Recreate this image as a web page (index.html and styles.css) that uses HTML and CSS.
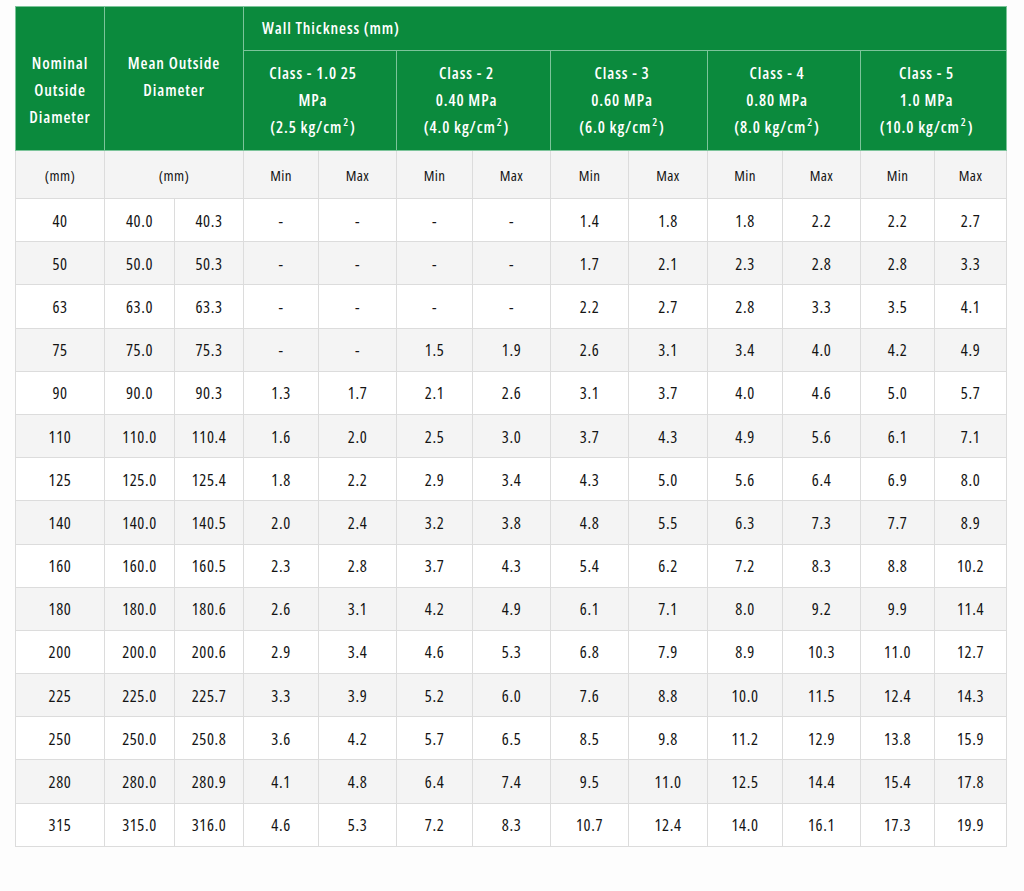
FILE: index.html
```html
<!DOCTYPE html>
<html>
<head>
<meta charset="utf-8">
<link rel="stylesheet" href="styles.css">
</head>
<body>
<table class="spec">
<colgroup>
<col style="width:89px"><col style="width:70px"><col style="width:69px">
<col style="width:75px"><col style="width:78px"><col style="width:76px"><col style="width:78px">
<col style="width:78px"><col style="width:79px"><col style="width:75px"><col style="width:78px">
<col style="width:74px"><col style="width:72px">
</colgroup>
<thead>
<tr class="h1">
<th rowspan="2" class="top">Nominal<br>Outside<br>Diameter</th>
<th rowspan="2" colspan="2" class="top">Mean Outside<br>Diameter</th>
<th colspan="10" class="wall">Wall Thickness (mm)</th>
</tr>
<tr class="h2">
<th colspan="2" class="cls">Class - 1.0 25<br>MPa<br>(2.5 kg/cm<sup>2</sup>)</th>
<th colspan="2" class="cls">Class - 2<br>0.40 MPa<br>(4.0 kg/cm<sup>2</sup>)</th>
<th colspan="2" class="cls">Class - 3<br>0.60 MPa<br>(6.0 kg/cm<sup>2</sup>)</th>
<th colspan="2" class="cls">Class - 4<br>0.80 MPa<br>(8.0 kg/cm<sup>2</sup>)</th>
<th colspan="2" class="cls">Class - 5<br>1.0 MPa<br>(10.0 kg/cm<sup>2</sup>)</th>
</tr>
</thead>
<tbody>
<tr class="units"><td>(mm)</td><td colspan="2">(mm)</td><td>Min</td><td>Max</td><td>Min</td><td>Max</td><td>Min</td><td>Max</td><td>Min</td><td>Max</td><td>Min</td><td>Max</td></tr>
<tr><td>40</td><td>40.0</td><td>40.3</td><td>-</td><td>-</td><td>-</td><td>-</td><td>1.4</td><td>1.8</td><td>1.8</td><td>2.2</td><td>2.2</td><td>2.7</td></tr>
<tr><td>50</td><td>50.0</td><td>50.3</td><td>-</td><td>-</td><td>-</td><td>-</td><td>1.7</td><td>2.1</td><td>2.3</td><td>2.8</td><td>2.8</td><td>3.3</td></tr>
<tr><td>63</td><td>63.0</td><td>63.3</td><td>-</td><td>-</td><td>-</td><td>-</td><td>2.2</td><td>2.7</td><td>2.8</td><td>3.3</td><td>3.5</td><td>4.1</td></tr>
<tr><td>75</td><td>75.0</td><td>75.3</td><td>-</td><td>-</td><td>1.5</td><td>1.9</td><td>2.6</td><td>3.1</td><td>3.4</td><td>4.0</td><td>4.2</td><td>4.9</td></tr>
<tr><td>90</td><td>90.0</td><td>90.3</td><td>1.3</td><td>1.7</td><td>2.1</td><td>2.6</td><td>3.1</td><td>3.7</td><td>4.0</td><td>4.6</td><td>5.0</td><td>5.7</td></tr>
<tr><td>110</td><td>110.0</td><td>110.4</td><td>1.6</td><td>2.0</td><td>2.5</td><td>3.0</td><td>3.7</td><td>4.3</td><td>4.9</td><td>5.6</td><td>6.1</td><td>7.1</td></tr>
<tr><td>125</td><td>125.0</td><td>125.4</td><td>1.8</td><td>2.2</td><td>2.9</td><td>3.4</td><td>4.3</td><td>5.0</td><td>5.6</td><td>6.4</td><td>6.9</td><td>8.0</td></tr>
<tr><td>140</td><td>140.0</td><td>140.5</td><td>2.0</td><td>2.4</td><td>3.2</td><td>3.8</td><td>4.8</td><td>5.5</td><td>6.3</td><td>7.3</td><td>7.7</td><td>8.9</td></tr>
<tr><td>160</td><td>160.0</td><td>160.5</td><td>2.3</td><td>2.8</td><td>3.7</td><td>4.3</td><td>5.4</td><td>6.2</td><td>7.2</td><td>8.3</td><td>8.8</td><td>10.2</td></tr>
<tr><td>180</td><td>180.0</td><td>180.6</td><td>2.6</td><td>3.1</td><td>4.2</td><td>4.9</td><td>6.1</td><td>7.1</td><td>8.0</td><td>9.2</td><td>9.9</td><td>11.4</td></tr>
<tr><td>200</td><td>200.0</td><td>200.6</td><td>2.9</td><td>3.4</td><td>4.6</td><td>5.3</td><td>6.8</td><td>7.9</td><td>8.9</td><td>10.3</td><td>11.0</td><td>12.7</td></tr>
<tr><td>225</td><td>225.0</td><td>225.7</td><td>3.3</td><td>3.9</td><td>5.2</td><td>6.0</td><td>7.6</td><td>8.8</td><td>10.0</td><td>11.5</td><td>12.4</td><td>14.3</td></tr>
<tr><td>250</td><td>250.0</td><td>250.8</td><td>3.6</td><td>4.2</td><td>5.7</td><td>6.5</td><td>8.5</td><td>9.8</td><td>11.2</td><td>12.9</td><td>13.8</td><td>15.9</td></tr>
<tr><td>280</td><td>280.0</td><td>280.9</td><td>4.1</td><td>4.8</td><td>6.4</td><td>7.4</td><td>9.5</td><td>11.0</td><td>12.5</td><td>14.4</td><td>15.4</td><td>17.8</td></tr>
<tr><td>315</td><td>315.0</td><td>316.0</td><td>4.6</td><td>5.3</td><td>7.2</td><td>8.3</td><td>10.7</td><td>12.4</td><td>14.0</td><td>16.1</td><td>17.3</td><td>19.9</td></tr>
</tbody>
</table>
</body>
</html>
```
FILE: styles.css
```css
html, body {
  margin: 0;
  padding: 0;
  background: #fdfdfd;
}
body {
  padding: 6px 0 0 15px;
  font-family: "Open Sans", "DejaVu Sans Condensed", sans-serif;
  color: #141414;
}
.spec {
  border-collapse: collapse;
  table-layout: fixed;
  width: 991px;
}
.spec th {
  background: #0b8a3d;
  color: #ffffff;
  font-stretch: 75%;
  font-weight: 600;
  font-size: 16px;
  letter-spacing: 0.9px;
  line-height: 27px;
  border: 1px solid #7cc49a;
  padding: 0;
  text-align: center;
  vertical-align: middle;
}
.spec th.top {
  vertical-align: top;
  padding-top: 43px;
}
.spec th.cls {
  padding-right: 14px;
}
.spec th.wall {
  text-align: left;
  padding-left: 18px;
}
.spec sup {
  font-size: 11px;
  line-height: 0;
  vertical-align: 7px;
  padding: 0 1px;
}
.h1 { height: 44px; }
.h2 { height: 100px; }
.spec td {
  border: 1px solid #dcdcdc;
  text-align: center;
  vertical-align: middle;
  font-size: 16.5px;
  font-stretch: 75%;
  font-weight: 500;
  letter-spacing: 0.6px;
  padding: 0;
  height: 42.2px;
}
.spec tbody tr:nth-child(odd) td {
  background: #f4f4f4;
}
.spec tbody tr:nth-child(even) td {
  background: #ffffff;
}
.spec tr.units td {
  height: 47px;
  font-size: 15px;
  letter-spacing: 0.4px;
}
```
